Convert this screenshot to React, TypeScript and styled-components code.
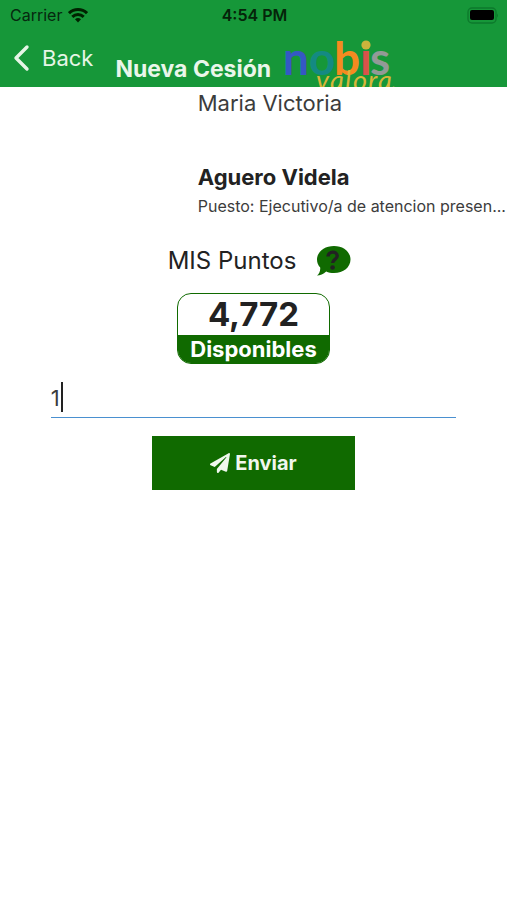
import React, { useState } from "react";
import styled, { createGlobalStyle, ThemeProvider } from "styled-components";
import { FaPaperPlane } from "react-icons/fa";

const theme = {
  palette: {
    header: "#169739",
    green: "#106a00",
    text: "#222222",
    textLight: "#3c3c3c",
    underline: "#4a90d0",
    white: "#ffffff",
  },
};

const GlobalStyle = createGlobalStyle`
  * {
    box-sizing: border-box;
  }
  body {
    margin: 0;
    background-color: #ffffff;
    color: #222222;
    font-family: Inter, "Liberation Sans", sans-serif;
  }
`;

const Header = styled.header`
  background-color: ${({ theme }) => theme.palette.header};
`;

const StatusBar = styled.div`
  display: grid;
  grid-template-columns: 1fr auto 1fr;
  align-items: center;
  height: 30px;
  padding: 0 8px 0 10px;
  color: #06280f;
  font-size: 16px;
  line-height: 20px;
`;

const Carrier = styled.div`
  display: flex;
  align-items: center;
  gap: 6px;
`;

const Clock = styled.div`
  color: #052409;
  font-weight: 600;
`;

const BatteryIcon = styled.svg`
  justify-self: end;
`;

const NavBar = styled.nav`
  display: flex;
  height: 57px;
  padding-left: 12px;
`;

const BackButton = styled.button`
  display: flex;
  align-items: center;
  gap: 12px;
  height: 56px;
  padding: 0;
  border: 0;
  background: none;
  color: #e6f5e6;
  font-family: inherit;
  font-size: 22px;
  line-height: 28px;
`;

const Title = styled.h1`
  margin: 24px 0 0 22px;
  color: #eaf6ea;
  font-size: 23px;
  font-weight: 700;
  line-height: 30px;
  white-space: nowrap;
`;

const Logo = styled.svg`
  flex: none;
  margin-left: 12px;
  overflow: hidden;
`;

const Main = styled.main`
  display: flex;
  flex-direction: column;
  align-items: center;
`;

const Person = styled.section`
  align-self: stretch;
  padding-left: 39%;
  white-space: nowrap;
`;

const FirstName = styled.p`
  margin: 0;
  color: ${({ theme }) => theme.palette.textLight};
  font-size: 22px;
  line-height: 32px;
`;

const LastName = styled.h2`
  margin: 41px 0 0;
  font-size: 22px;
  font-weight: 700;
  line-height: 34px;
`;

const Position = styled.p`
  margin: 0;
  color: ${({ theme }) => theme.palette.textLight};
  font-size: 16px;
  line-height: 24px;
`;

const PointsHeading = styled.div`
  display: flex;
  align-items: center;
  gap: 20px;
  margin: 25px 0 0 12px;
  font-size: 24px;
  line-height: 36px;
`;

const HelpButton = styled.button`
  display: flex;
  padding: 0;
  border: 0;
  background: none;
`;

const PointsCard = styled.section`
  width: 30%;
  margin-top: 14px;
  overflow: hidden;
  border: 1px solid ${({ theme }) => theme.palette.green};
  border-radius: 14px;
  text-align: center;
`;

const Points = styled.div`
  font-size: 33px;
  font-weight: 700;
  line-height: 41px;
`;

const PointsLabel = styled.div`
  background-color: ${({ theme }) => theme.palette.green};
  color: ${({ theme }) => theme.palette.white};
  font-size: 22px;
  font-weight: 700;
  line-height: 28px;
`;

const Form = styled.form`
  display: flex;
  flex-direction: column;
  align-items: center;
  align-self: stretch;
  gap: 18px;
  margin-top: 14px;
`;

const Field = styled.div`
  position: relative;
  width: 80%;
`;

const AmountInput = styled.input`
  display: block;
  width: 100%;
  height: 40px;
  padding: 0;
  border: 0;
  border-bottom: 1px solid ${({ theme }) => theme.palette.underline};
  outline: 0;
  color: ${({ theme }) => theme.palette.textLight};
  font-family: inherit;
  font-size: 22px;
`;

const Caret = styled.span`
  position: absolute;
  top: 4px;
  left: 10px;
  width: 2px;
  height: 30px;
  background-color: ${({ theme }) => theme.palette.text};
`;

const SubmitButton = styled.button`
  display: flex;
  align-items: center;
  justify-content: center;
  gap: 5px;
  width: 40%;
  height: 54px;
  border: 0;
  background-color: ${({ theme }) => theme.palette.green};
  color: #f0f7ee;
  font-family: inherit;
  font-size: 20px;
  font-weight: 700;
`;

const WifiIcon: React.FC = () => (
  <svg width="20" height="15" viewBox="0 0 20 15" fill="none" stroke="#020" strokeWidth="3">
    <path d="M1 5.2C6 .4 14 .4 19 5.2" />
    <path d="M4.3 8.8C7.6 5.7 12.4 5.7 15.7 8.8" />
    <path d="M7 11.2Q10 8.8 13 11.2L10 14.6Z" fill="#020" stroke="none" />
  </svg>
);

const Battery: React.FC = () => (
  <BatteryIcon width="33" height="17" viewBox="0 0 33 17">
    <rect x="2" y="1" width="28" height="15" rx="4" fill="none" stroke="#0d7a2c" strokeWidth="1.4" />
    <rect x="4" y="3" width="24" height="10" rx="2" fill="#000" />
    <path d="M31 6.500Q33 8.500 31 10.500Z" fill="#0d7a2c" />
  </BatteryIcon>
);

const NobisLogo: React.FC = () => (
  <Logo width="118" height="57" viewBox="0 0 118 57" role="img" aria-label="nobis valora">
    <text y="45" fontFamily="Lato, sans-serif" fontSize="46" fontWeight="700">
      <tspan x="0" fill="#3558c4">n</tspan>
      <tspan x="26" fill="#148a83">o</tspan>
      <tspan x="51" fill="#f58a20">b</tspan>
      <tspan x="77" fill="#d9534a">i</tspan>
      <tspan x="87" fill="#929a96">s</tspan>
    </text>
    <circle cx="83" cy="15" r="4.6" fill="#ccb43c" />
    <text
      y="60"
      fontFamily="Lato, sans-serif"
      fontSize="27"
      fontStyle="italic"
      fill="#d9b53a"
    >
      <tspan x="33">v</tspan>
      <tspan x="47">a</tspan>
      <tspan x="62">l</tspan>
      <tspan x="70">o</tspan>
      <tspan x="85">r</tspan>
      <tspan x="95">a</tspan>
      <tspan x="108">.</tspan>
    </text>
  </Logo>
);

const App: React.FC = () => {
  const [amount, setAmount] = useState("1");
  return (
    <ThemeProvider theme={theme}>
      <GlobalStyle />
      <Header>
        <StatusBar>
          <Carrier>
            Carrier
            <WifiIcon />
          </Carrier>
          <Clock>4:54 PM</Clock>
          <Battery />
        </StatusBar>
        <NavBar>
          <BackButton type="button">
            <svg width="18" height="28" viewBox="0 0 18 28" fill="none">
              <path
                d="M15 3L4 14L15 25"
                stroke="currentColor"
                strokeWidth="3.4"
                strokeLinecap="round"
                strokeLinejoin="round"
              />
            </svg>
            Back
          </BackButton>
          <Title>Nueva Cesión</Title>
          <NobisLogo />
        </NavBar>
      </Header>
      <Main>
        <Person>
          <FirstName>Maria Victoria</FirstName>
          <LastName>Aguero Videla</LastName>
          <Position>Puesto: Ejecutivo/a de atencion presen...</Position>
        </Person>
        <PointsHeading>
          MIS Puntos
          <HelpButton type="button" aria-label="Ayuda">
            <svg width="35" height="30" viewBox="0 0 35 30">
              <path
                d="M18 0C27.5 0 34.5 5.8 34.5 13.5S27.5 27 18 27C15 27 12.5 26.5 10.2 25.4C7.5 28 4 29.5 1 29.6C3.3 27.5 4.5 24.5 4.2 21.5C2 19.3 1 16.5 1 13.5C1 5.8 8.5 0 18 0Z"
                fill="#106a00"
              />
              <path
                d="M12 10.5C12.3 4.7 21.2 4.7 21.2 10C21.2 13.5 16.8 13.3 16.6 17"
                fill="none"
                stroke="#222"
                strokeWidth="3.4"
              />
              <circle cx="16.6" cy="21.5" r="2.3" fill="#222" />
            </svg>
          </HelpButton>
        </PointsHeading>
        <PointsCard>
          <Points>4,772</Points>
          <PointsLabel>Disponibles</PointsLabel>
        </PointsCard>
        <Form onSubmit={(e) => e.preventDefault()}>
          <Field>
            <AmountInput
              aria-label="Puntos"
              inputMode="numeric"
              value={amount}
              onChange={(e) => setAmount(e.target.value)}
            />
            <Caret />
          </Field>
          <SubmitButton type="submit">
            <FaPaperPlane size={20} />
            Enviar
          </SubmitButton>
        </Form>
      </Main>
    </ThemeProvider>
  );
};

export default App;
